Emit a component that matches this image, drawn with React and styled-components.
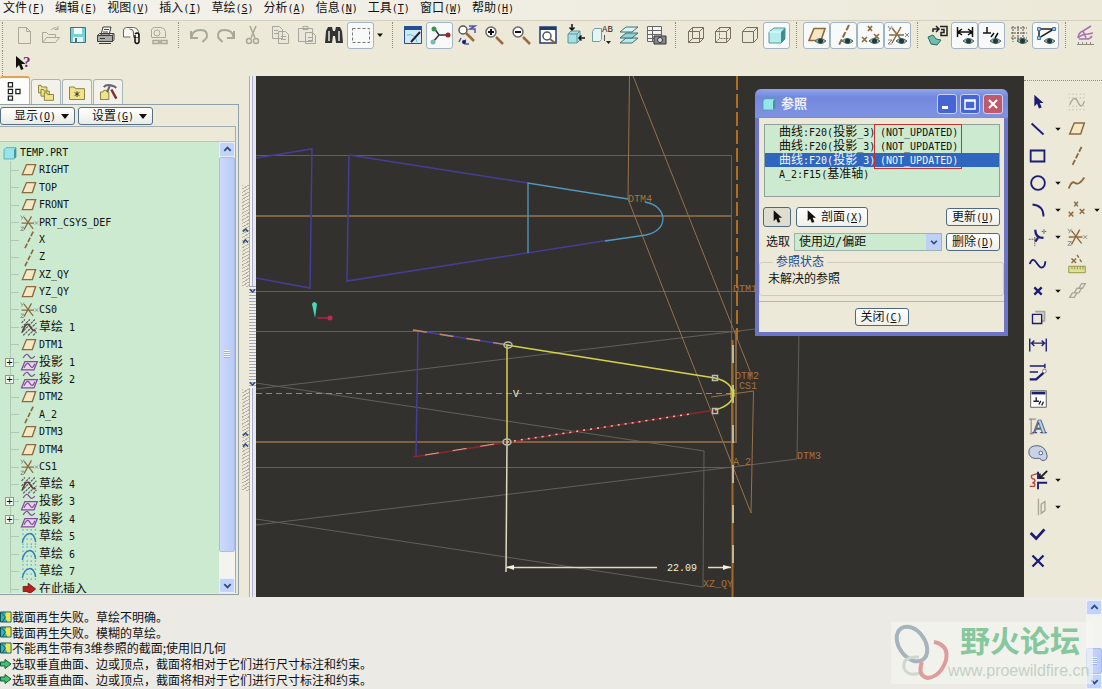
import { useState } from 'react'
import styled, { createGlobalStyle, css } from 'styled-components'

const GlobalStyle = createGlobalStyle`
	* {
		box-sizing: border-box;
	}
	body {
		margin: 0;
		background: #ece9d8;
		color: #111;
		font: 10px/14px 'DejaVu Sans Mono', 'Noto Sans CJK SC', monospace;
	}
	button, select {
		font: inherit;
		color: inherit;
	}
	svg {
		display: block;
		flex: none;
	}
`

const plainButton = css`
	display: flex;
	align-items: center;
	justify-content: center;
	padding: 0;
	border: 0;
	background: none;
`

const Page = styled.div`
	display: flex;
	flex-direction: column;
	height: 100vh;
	overflow: hidden;
`
const Han = styled.span`
	font-size: 12px;
`

const Menu = styled.nav`
	display: flex;
	gap: 10px;
	height: 21px;
	padding-left: 3px;
	border-bottom: 1px solid #d3d0c0;
	background: linear-gradient(90deg, #f3f2ec, #ece9d8);
`
const MenuItem = styled.button`
	${plainButton}
	height: 16px;
	white-space: nowrap;
`

const ToolbarBox = styled.div`
	height: 55px;
	overflow: hidden;
`
const Tools = styled.div`
	display: flex;
	height: 28px;
	align-items: center;
`
const ToolGroup = styled.div`
	display: flex;
	align-items: center;
	height: 26px;
	padding-left: ${({ $first }) => ($first ? '7px' : '6px')};
	margin-left: ${({ $first }) => ($first ? '2px' : '6px')};
	border-left: 1px dotted #8f8c7c;
`
const Tool = styled.button`
	${plainButton}
	width: ${({ $narrow }) => ($narrow ? '12px' : '27px')};
	height: 27px;
	overflow: hidden;
	${({ $pressed }) =>
		$pressed &&
		css`
			border: 1px solid #a3b5c4;
			border-radius: 3px;
			background: #f8fafa;
		`}
`

const Main = styled.main`
	display: flex;
	flex: 1;
	min-height: 0;
`
const Side = styled.aside`
	display: flex;
	flex-direction: column;
	width: 239px;
	padding-bottom: 2px;
`
const Tabs = styled.div`
	display: flex;
	align-items: flex-end;
	gap: 1px;
	height: 28px;
`
const Tab = styled.button`
	${plainButton}
	width: 30px;
	height: 25px;
	border: 1px solid #a9b5bb;
	border-bottom: 0;
	border-radius: 3px 3px 0 0;
	background: #f3f2ea;
	${({ $active }) =>
		$active &&
		css`
			height: 28px;
			border-top: 2px solid #e8a04a;
			border-left: 0;
			background: #fdfdfb;
		`}
`
const Panel = styled.div`
	display: flex;
	flex: 1;
	flex-direction: column;
	min-height: 0;
	padding: 2px 2px 1px 0;
	border: 1px solid #8fa0a8;
	border-left: 0;
`
const PanelButtons = styled.div`
	display: flex;
	gap: 3px;
`
const DropButton = styled.button`
	${plainButton}
	gap: 5px;
	width: 75px;
	height: 18px;
	padding-left: 8px;
	border: 1px solid #54708a;
	border-radius: 3px;
	background: linear-gradient(#fff, #ebebe4);
	white-space: nowrap;
`
const Triangle = styled.span`
	border: 4px solid transparent;
	border-top: 5px solid #111;
	border-bottom: 0;
`
const TreeHead = styled.div`
	height: 16px;
	margin-top: 1px;
	border: 1px solid #a2adb0;
	border-left: 0;
	border-bottom-color: #c4c4b6;
`
const TreeBox = styled.div`
	display: flex;
	flex: 1;
	min-height: 0;
	border-right: 1px solid #a2adb0;
	background: #cceacf;
`
const TreeClip = styled.div`
	flex: 1;
	overflow: hidden;
`
const Tree = styled.ul`
	display: grid;
	grid-auto-rows: minmax(0, 1fr);
	height: calc(100% + 5px);
	margin: 0;
	padding: 2px 0 0 2px;
	list-style: none;
`
const Root = styled.li`
	display: flex;
	align-items: center;
	gap: 2px;
`
const Feature = styled.li`
	display: flex;
	align-items: center;
	min-height: 0;
`
const Expander = styled.span`
	display: flex;
	align-items: center;
	align-self: stretch;
	width: 17px;
	padding-left: 3px;
	background:
		linear-gradient(#b3c8b3, #b3c8b3) 8px 0 / 1px 100% no-repeat,
		linear-gradient(#b3c8b3, #b3c8b3) 9px 50% / 8px 1px no-repeat;
`
const Plus = styled.button`
	${plainButton}
	width: 9px;
	height: 9px;
	border: 1px solid #8d9b8d;
	background: #f4f8f0;
	line-height: 7px;
`

const Scroll = styled.div`
	display: flex;
	flex-direction: column;
	width: 16px;
	background: #f3f3ef;
`
const ScrollButton = styled.button`
	${plainButton}
	height: 15px;
	border: 1px solid #e9effc;
	border-radius: 2px;
	background: #c2d3fa;
`
const Track = styled.div`
	flex: ${({ $size }) => $size} 0 0;
`
const Thumb = styled.div`
	flex: ${({ $size }) => $size} 0 0;
	border: 1px solid #a9bdee;
	border-radius: 2px;
	background:
		repeating-linear-gradient(#eef3ff 0 1px, #9eb4ea 1px 2px) center / 6px 8px no-repeat,
		linear-gradient(90deg, #cbd9fd, #b9cbf6);
`

const Sash = styled.div`
	display: flex;
	flex-direction: column;
	align-items: center;
	justify-content: center;
	gap: 102px;
	width: 10px;
	padding: 2px 0 0 2px;
`
const Grip = styled.div`
	display: flex;
	flex-direction: column;
	align-items: center;
	justify-content: center;
	gap: 2px;
	width: 7px;
	height: 102px;
	background: repeating-linear-gradient(150deg, #b5b2a3 0 1px, #ece9d8 1px 3px);
`
const Splitter = styled.div`
	display: flex;
	flex-direction: column;
	align-items: center;
	justify-content: center;
	width: 7px;
	background: linear-gradient(90deg, #a3a9c6 0 1px, #f3f3f6 1px 3px, #aab0cc 3px 4px, #e6e7ec 4px 7px);
`
const SplitterGrip = styled.div`
	display: flex;
	flex-direction: column;
	align-items: center;
	justify-content: space-between;
	width: 7px;
	height: 102px;
	background: repeating-linear-gradient(#a4a6b5 0 1px, #efefec 1px 3px);
`

const Canvas = styled.section`
	position: relative;
	flex: 1;
	min-width: 0;
	background: #33312d;
`
const CanvasFill = styled.div`
	height: 100%;
	overflow: hidden;
`
const Tags = styled.g`
	fill: ${({ $light }) => ($light ? '#f0efdc' : '#a5733a')};
	font: 10px 'Liberation Mono', monospace;
`

const Dialog = styled.div`
	position: absolute;
	top: 13px;
	right: 16px;
	width: 253px;
	padding: 0 4px 4px;
	border-radius: 6px 6px 0 0;
	background: linear-gradient(#8fa5ec, #7288dd 8px, #7f93e2 28px, #6b74c6 30px);
`
const TitleBar = styled.div`
	display: flex;
	align-items: center;
	gap: 2px;
	height: 29px;
	padding: 0 1px 0 2px;
`
const DialogTitle = styled.strong`
	flex: 1;
	padding-left: 2px;
	color: #eef1fd;
	font-size: 13px;
`
const WindowButton = styled.button`
	${plainButton}
	width: 20px;
	height: 20px;
	margin-left: 1px;
	border: 1px solid #c8d2f6;
	border-radius: 3px;
	background: ${({ $close }) => ($close ? '#c0596a' : '#4665d4')};
`
const DialogBody = styled.div`
	padding-top: 6px;
	background: #ece9d8;
`
const RefList = styled.div`
	position: relative;
	height: 73px;
	margin: 0 4px 0 5px;
	border: 1px solid #8ea19a;
	background: #cceacf;
	white-space: nowrap;
`
const RefRow = styled.div`
	display: grid;
	grid-template-columns: 101px auto;
	align-items: center;
	height: 14px;
	padding-left: 14px;
	line-height: 14px;
	cursor: default;
	${({ $selected }) =>
		$selected &&
		css`
			background: #2f66bf;
			color: #f4f7ff;
		`}
`
const RedMark = styled.div`
	position: absolute;
	top: -1px;
	left: 109px;
	width: 88px;
	height: 45px;
	border: 1px solid #c8322e;
	pointer-events: none;
`
const ButtonRow = styled.div`
	display: flex;
	align-items: center;
	gap: 5px;
	margin: 10px 4px 0;
`
const SelectRow = styled(ButtonRow)`
	gap: 4px;
	margin-top: 6px;
	padding-left: 3px;
`
const Spacer = styled.span`
	flex: 1;
`
const Button = styled.button`
	${plainButton}
	width: ${({ $width }) => $width}px;
	height: ${({ $tall }) => ($tall ? 20 : 18)}px;
	border: 1px solid #4e6a80;
	border-radius: 3px;
	background: ${({ $down }) => ($down ? '#dfddd0' : 'linear-gradient(#fff, #f0efe8)')};
	white-space: nowrap;
`
const SelectBox = styled.div`
	display: grid;
	flex: 1;
	align-items: center;
	justify-items: end;
	border: 1px solid #9fb3ad;
	background: #cceacf;
`
const Select = styled.select`
	grid-area: 1 / 1;
	width: 100%;
	height: 16px;
	padding: 0 4px;
	appearance: none;
	border: 0;
	background: none;
	font-size: 12px;
	line-height: 16px;
`
const SelectArrow = styled.span`
	display: grid;
	grid-area: 1 / 1;
	place-items: center;
	width: 15px;
	height: 16px;
	background: #bfd0f7;
	pointer-events: none;
`
const Status = styled.fieldset`
	height: 41px;
	margin: 4px 0 0;
	padding: 3px 8px 0;
	border: 1px solid #cfccbd;
	border-radius: 3px;
`
const Legend = styled.legend`
	margin-left: 5px;
	padding: 0 3px;
	color: #24468f;
	font-size: 12px;
`
const DialogFoot = styled.div`
	display: flex;
	justify-content: center;
	margin-top: 5px;
	padding: 6px 0;
	border-top: 1px solid #b9b7aa;
`

const SketchGrid = styled.div`
	display: grid;
	grid-template-columns: 28px 11px 28px 11px;
	grid-auto-rows: 27px;
	align-content: start;
	width: 78px;
	margin-top: 4px;
	padding-top: 7px;
	border-top: 1px dotted #8f8c7c;
`
const SketchTool = styled.button`
	${plainButton}
	overflow: hidden;
`
const Empty = styled.span``

const Messages = styled.footer`
	position: relative;
	display: flex;
	height: 92px;
	padding-top: 3px;
	background: #ebeae4;
`
const MessageList = styled.div`
	display: grid;
	flex: 1;
	grid-auto-rows: 1fr;
	padding-top: 9px;
	margin-bottom: 2px;
`
const Message = styled.div`
	display: flex;
	align-items: center;
	font: 12px/15px 'Noto Sans CJK SC', sans-serif;
`
const WatermarkBox = styled.div`
	position: absolute;
	right: 9px;
	bottom: 5px;
	display: flex;
	width: 202px;
	height: 62px;
	background: rgba(247, 247, 244, 0.6);
	pointer-events: none;
`
const Brand = styled.div`
	display: flex;
	flex-direction: column;
	margin-left: -5px;
	font-family: 'Liberation Sans', 'Noto Sans CJK SC', sans-serif;
`
const BrandName = styled.strong`
	padding-left: 12px;
	color: #86c79d;
	font-size: 30px;
	line-height: 40px;
`
const BrandUrl = styled.a`
	color: #c3d0c5;
	font-size: 16px;
	line-height: 18px;
	text-decoration: none;
`

const NAVY = '#1b1c78'
const BROWN = '#8c6a40'
const GRAY = '#a9a799'

const eye = (
	<g>
		<path d="M10 18q5-5 11 0q-5 5-11 0z" fill="#8fb3b0" stroke="#4d6664" />
		<circle cx="15.5" cy="18" r="2.5" fill="#1f3a3a" />
	</g>
)
const plane = <path d="M9 5.500h11l-4 12H4z" fill="#f4e7c4" stroke={BROWN} strokeWidth="1.6" />
const axis = <path d="M17 2L7 22" stroke={BROWN} strokeWidth="2" strokeDasharray="6 2" />
const csys = (
	<g stroke={BROWN} strokeWidth="1.5">
		<path d="M3 12h15M6 5l11 14M15 4L6 20" />
		<path d="M19 10l4 4m0-4l-4 4M2 3l2 3m2-3L3 8M2 17h4l-4 4h4" stroke="#85888a" strokeWidth="1" />
	</g>
)
const points = (
	<path
		d="M9 3l4 5m0-5L9 8M3 14l5 5m0-5l-5 5M15 11l5 5m0-5l-5 5"
		stroke={BROWN}
		strokeWidth="1.6"
	/>
)
const cube = <path d="M4.500 8.500h11v11h-11zM8.500 4.500h11v11M4.500 8.500l4-4M15.500 8.500l4-4M15.500 19.500l4-4" />
const lens = <path d="M14 14l7 7" stroke="#9a6b45" strokeWidth="2.5" />
const caret = <path d="M9 10.500h6l-3 3.500z" fill="#111" />

const icons = {
	new: <path d="M6.500 4.500h8l4 4v12h-12zM14.500 4.500v4h4" stroke={GRAY} />,
	open: <path d="M3.500 19.500V9.500h4l2 2h7v3M3.500 19.500l4-5h13l-4 5zM12 7q4-4 7-1m0-3v3.500h-3.500" stroke={GRAY} />,
	save: (
		<g>
			<path d="M4.500 4.500h15v15h-15z" fill="#78d0da" stroke="#45707c" />
			<path d="M8 5h8v6H8z" fill="#f2fbfc" />
			<path d="M7 14h10v5H7z" fill="#e6f4f5" />
			<path d="M9 15h2v4H9z" fill="#45707c" />
		</g>
	),
	print: (
		<g stroke="#3c3c3c">
			<path d="M8 12l2-8h8l-2 8z" fill="#fff" />
			<path d="M4.500 12.500h15v6h-15z" fill="#aaa" />
			<path d="M4.500 12.500l2-2h14l-1 2M19.500 18.500l1.500-2v-6M6 20.500h12M11 6.500h5M10 9h5M7 15.500h5" />
		</g>
	),
	mail: (
		<g>
			<path d="M3.500 14V7q0-2 3-2.500h7q4 0 5 4v6h-5M3.500 14h7M13.500 14V9q0-3-4-3" fill="#fafaf3" stroke="#666" />
			<path d="M15 12v7q2 3 4 0v-8q-2-2-4 0" stroke="#111" strokeWidth="1.5" />
		</g>
	),
	link: (
		<g stroke={GRAY}>
			<path d="M4.500 14V7q0-2 3-2.500h6q4 0 5 4v6h-14" />
			<circle cx="10" cy="10" r="3" />
			<path d="M6 17.500h6v3H6zM14 17.500h6v3h-6zM12 19h2" strokeWidth="1.5" />
		</g>
	),
	undo: <path d="M4 8v7h7M4.500 14q1-7 9-7t6 8l-4 4" stroke={GRAY} strokeWidth="2" />,
	redo: <path d="M20 8v7h-7M19.500 14q-1-7-9-7t-6 8l4 4" stroke={GRAY} strokeWidth="2" />,
	cut: (
		<g stroke={GRAY} strokeWidth="1.5">
			<path d="M15 3l-5 12M9 3l5 12" />
			<circle cx="8" cy="18" r="2.5" />
			<circle cx="15" cy="18" r="2.5" />
		</g>
	),
	copy: <path d="M4.500 3.500h7l3 3v9h-10zM10.500 8.500h7l3 3v9h-10zM6 7.500h4M6 10.500h4M13 13.500h5M13 16.500h5" fill="#e9e7dc" stroke={GRAY} />,
	paste: <path d="M3.500 5.500h14v13h-14zM8 3.500h5v3H8zM10.500 9.500h7l3 3v8h-10zM13 14.500h5M13 17.500h5" fill="#e9e7dc" stroke={GRAY} />,
	find: (
		<g>
			<path d="M4 8l2-4h4l1 4h2l1-4h4l2 4 1 12h-7l-1-7h-2l-1 7H3z" fill="#333" />
			<path d="M7 8v10M17 8v10" stroke="#b9b9b9" strokeWidth="2" />
		</g>
	),
	marquee: <path d="M3.500 5.500h17v14h-17z" stroke="#777" strokeDasharray="3 2" />,
	sketchView: (
		<g>
			<path d="M3.500 3.500h17v17h-17z" fill="#cfe9f7" stroke="#234f94" />
			<path d="M3 3h18v4H3z" fill="#234f94" />
			<path d="M6 12q8-2 10 7" stroke="#5dbbe0" />
			<path d="M10 19l9-10" stroke="#223" strokeWidth="2" />
		</g>
	),
	spin: (
		<g>
			<path d="M6 5l5 7h9M11 12l-6 7" stroke="#333" strokeWidth="1.5" />
			<circle cx="6" cy="6" r="2.5" fill="#3f8f57" />
			<circle cx="20" cy="12" r="2.5" fill="#9c2525" />
			<circle cx="5" cy="19" r="2.5" fill="#7fb8b4" />
		</g>
	),
	orient: (
		<g>
			<circle cx="8" cy="7" r="4" fill="#fff" stroke="#555" strokeWidth="1.5" />
			<path d="M11 10l8 8" stroke="#9a6b45" strokeWidth="2.5" />
			<path d="M14 3h6l-5 3h5v4M6 15l-2 4M11 17q-4 2-1 4h4" stroke="#5555a5" strokeWidth="1.5" />
			<circle cx="9" cy="19" r="2" fill={NAVY} />
		</g>
	),
	zoomIn: (
		<g>
			{lens}
			<circle cx="9" cy="9" r="5" fill="#fff" stroke="#666" strokeWidth="1.5" />
			<path d="M6 9h6M9 6v6" stroke="#111" strokeWidth="2" />
		</g>
	),
	zoomOut: (
		<g>
			{lens}
			<circle cx="9" cy="9" r="5" fill="#fff" stroke="#666" strokeWidth="1.5" />
			<path d="M6 9h6" stroke="#111" strokeWidth="2" />
		</g>
	),
	refit: (
		<g>
			<path d="M4 4h16v16H4z" fill="#fff" stroke="#1d3c70" strokeWidth="1.5" />
			<path d="M4 4h16v3H4z" fill="#1d3c70" />
			<circle cx="11" cy="13" r="4" stroke="#555" strokeWidth="1.5" />
			<path d="M14 16l5 4" stroke="#8a6040" strokeWidth="2" />
		</g>
	),
	viewOrient: (
		<g>
			<path d="M5 11l3-3h9v9l-3 3H5z" fill="#a8dfe2" stroke="#57999c" />
			<path d="M14 11v9M5 11h9l3-3" stroke="#57999c" />
			<path d="M9 1v6M6.500 4.500L9 7l2.500-2.500M22 15h-6M18.500 12.500L16 15l2.500 2.500" stroke="#111" strokeWidth="1.5" />
		</g>
	),
	saved: (
		<g>
			<path d="M2.500 8.500l2-3h7v11l-2 2h-7z" fill="#e3f5f5" stroke="#74a0a2" />
			<text x="12" y="9" fontSize="9" fontFamily="Liberation Mono" fill="#222">AB</text>
			<path d="M14.500 12v6" stroke="#555" />
			<path d="M16 18h5l-2.500 3z" fill="#222" />
		</g>
	),
	layers: (
		<g stroke="#3a7076">
			<path d="M3 20l6-5h12l-6 5z" fill="#bfe8e8" />
			<path d="M3 15l6-5h12l-6 5z" fill="#8cd3d6" />
			<path d="M3 9l6-5h12l-6 5z" fill="#d7f3f3" />
		</g>
	),
	viewMgr: (
		<g>
			<path d="M3.500 3.500h14v15h-14zM3.500 7.500h14M3.500 11.500h14M3.500 15.500h14M8.500 3.500v15" fill="#f5f5ef" stroke="#666" />
			<path d="M10 13h12v8H10z" fill="#888" stroke="#333" />
			<circle cx="16" cy="17" r="2.5" fill="#ddd" stroke="#333" />
		</g>
	),
	wire: <g stroke="#77705f">{cube}<path d="M8.500 4.500v11h11M4.500 19.500l4-4" /></g>,
	hidden: <g stroke="#77705f">{cube}<path d="M8.500 4.500v11h11M4.500 19.500l4-4" strokeDasharray="2 1" /></g>,
	noHidden: <g stroke="#77705f">{cube}</g>,
	shaded: (
		<g>
			<path d="M4 9l5-4h11v11l-4 4H4z" fill="#b5edef" stroke="#5e9496" />
			<path d="M16 9v11l4-4V5z" fill="#3d8e92" />
			<path d="M4 9h12" stroke="#e6ffff" />
		</g>
	),
	planeShow: <g>{plane}{eye}</g>,
	axisShow: <g>{axis}{eye}</g>,
	pointShow: <g>{points}{eye}</g>,
	csysShow: <g>{csys}{eye}</g>,
	sketchOrient: (
		<g>
			<path d="M2 14l5-2 3 4 5 1-4 5-6-1z" fill="#6fbfae" stroke="#2d6a60" />
			<path d="M7 9V6h5m-2-3l3 3-3 3M14 3.500h7v9h-6v-3h3v-3h-3" stroke="#222" strokeWidth="1.5" />
		</g>
	),
	dimShow: (
		<g>
			<path d="M4.500 4v10M19.500 4v10M5 9h14M9 6L5 9l4 3M15 6l4 3-4 3" stroke="#111" strokeWidth="1.5" />
			{eye}
		</g>
	),
	constrShow: (
		<g>
			<path d="M3 10h8M7 10V4M11 14l3-4M15 15l3-5" stroke="#111" strokeWidth="1.5" />
			{eye}
		</g>
	),
	gridShow: (
		<g>
			<path d="M4 5h16M4 10h16M4 15h16M6 3v16M11 3v16M16 3v16" stroke="#555" strokeDasharray="2 1" />
			{eye}
		</g>
	),
	vertexShow: (
		<g>
			<path d="M5 6h15L5 15z" stroke="#222" strokeWidth="1.5" />
			<path d="M3.500 4.500h3v3h-3zM18.500 4.500h3v3h-3zM3.500 13.500h3v3h-3z" fill="#9ac2e8" stroke="#4a74aa" />
			{eye}
		</g>
	),
	analysis: (
		<g>
			<path d="M4 15q0-5 5-7l8-5M4 15q4-4 10-4l5-1M5 16h8q3 0 5-3M9 8l3 7" stroke="#a870b0" strokeWidth="1.5" />
			<path d="M3 21.500h17M4.500 19v2M8.500 19v2M12.500 19v2M16.500 19v2" stroke="#8c8a7d" />
		</g>
	),
	help: (
		<g>
			<path d="M4 5v12l3-3 2 5 2.500-1-2-5h4z" fill="#111" />
			<text x="11" y="16" fontSize="15" fontWeight="bold" fontFamily="Liberation Serif" fill="#7b1d7b">?</text>
		</g>
	),
	arrow: <path d="M8 4v13l3-3 2 5 3-1-2-5h4z" fill={NAVY} />,
	pick: <path d="M8 4v13l3-3 2 5 3-1-2-5h4z" fill="#111" />,
	line: <path d="M5 6l13 12" stroke={NAVY} strokeWidth="2" />,
	rect: <path d="M4 6h15v12H4z" stroke={NAVY} strokeWidth="2" />,
	circle: <circle cx="12" cy="12" r="7.500" stroke={NAVY} strokeWidth="2" />,
	arc: <path d="M6 6q12 1 12 13" stroke={NAVY} strokeWidth="2" />,
	fillet: (
		<g>
			<path d="M9 4q0 9 9 9M12 13l-3 4" stroke={NAVY} strokeWidth="2.5" />
			<path d="M2 14.500h10M8.500 12v10M16 6h5M18.500 3.500v5" stroke="#555" strokeDasharray="2 1" />
		</g>
	),
	spline: <path d="M3 12q3-8 7-2t6 6q4-1 4-7" stroke={NAVY} strokeWidth="2" />,
	point: <path d="M8 8l8 8M16 8l-8 8" stroke={NAVY} strokeWidth="2.5" />,
	edge: (
		<g>
			<path d="M9 5h10v10h-3" stroke="#a7a594" strokeWidth="2" />
			<path d="M6 8h10v10H6z" stroke={NAVY} strokeWidth="1.5" />
		</g>
	),
	dimension: <path d="M3 5v14M21 5v14M4 10h16M8 7l-3 3 3 3M16 7l3 3-3 3" stroke={NAVY} strokeWidth="1.5" />,
	modify: (
		<g stroke={NAVY}>
			<path d="M3 5.500h17M19.500 3v5M3 12h9" strokeWidth="1.5" />
			<path d="M3 20h7l8-7" strokeWidth="2.5" />
			<circle cx="19" cy="11" r="2" fill="#fff" stroke="#777" />
		</g>
	),
	constrain: (
		<g>
			<path d="M4 3h17v18H4z" fill="#fff" stroke="#555" />
			<path d="M5 4h15v3H5z" fill={NAVY} />
			<path d="M7 14.500h6M10 14v-4M13 18l2-4M16 19l2-4" stroke="#222" strokeWidth="1.5" />
		</g>
	),
	text: (
		<g>
			<path d="M4.500 4v17M2 4.500h8M3 20.500h4" stroke="#777" />
			<text x="6" y="20" fontSize="21" fontWeight="bold" fontFamily="Liberation Serif" fill="#c7d3ea" stroke="#2c3f6b" strokeWidth="0.8">A</text>
		</g>
	),
	palette: (
		<g stroke="#4b5474">
			<path d="M2 11q0-7 9-7t11 11q0 6-6 5-1-3-7-2-7-1-7-7z" fill="#c9d3e6" />
			<circle cx="15" cy="12" r="2" fill="#fff" />
		</g>
	),
	trim: (
		<g>
			<path d="M3 19h5q2-3-2-4 4-1 2-4-4 0-3-4l6-2" stroke="#b3473b" strokeWidth="1.5" />
			<path d="M12 22v-7h10M12 3v8" stroke={NAVY} strokeWidth="2" />
			<path d="M22 2l-7 7M14 5v5h5" stroke="#222" strokeWidth="2" />
		</g>
	),
	mirror: <path d="M12.500 3v18M15.500 9l4-3v10l-4 3z" stroke={GRAY} strokeWidth="1.5" />,
	done: <path d="M4 11l6 6L19 7" stroke={NAVY} strokeWidth="3" />,
	quit: <path d="M6 6l12 12M18 6L6 18" stroke={NAVY} strokeWidth="2.5" />,
	sketchOff: (
		<g stroke={GRAY}>
			<path d="M3 3.500h18M3 7.500h18M3 20.500h18M3 16.500h18" strokeDasharray="1 3" />
			<path d="M4 15q5-12 9-3t7-1" strokeWidth="1.5" />
		</g>
	),
	plane,
	axis,
	curve: <path d="M3 18q3-9 7-6t10-6" stroke={BROWN} strokeWidth="2" />,
	points,
	csys,
	measure: (
		<g>
			<path d="M3 14.500h18v7H3z" fill="#e0e29a" stroke="#8e8f3e" />
			<path d="M6.500 15v3M9.500 15v3M12.500 15v3M15.500 15v3M18.500 15v3" stroke="#8e8f3e" />
			<path d="M6 6l5 5m0-5l-5 5M12 2l2 3M15 7l2 3" stroke={BROWN} strokeWidth="1.5" />
		</g>
	),
	chain: <path d="M4 19l3-5 5 0-3 5zM9 14l3-5 5 0-3 5zM14 9l3-5 4 0-3 5z" stroke={GRAY} strokeWidth="1.5" />,
	part: (
		<g>
			<path d="M3 7l3-3h15v14l-3 3H3z" fill="#93e6ea" stroke="#4e8e95" />
			<path d="M18 7v14l3-3V4z" fill="#4a959b" />
		</g>
	),
	sketchHatch: (
		<g>
			<path d="M3 7l4-4M3 13L13 3M3 19L19 3M5 22L21 7M11 22l10-9M17 22l4-4" stroke="#555" strokeWidth="1.4" strokeDasharray="3 1" />
			<path d="M4 18q5-14 9-7t7 5" stroke="#5b3c44" strokeWidth="2" />
		</g>
	),
	sketch: (
		<g>
			<path d="M4 3.500h17M4 8.500h17M4 14.500h17M4 20.500h17" stroke="#4ba5c4" strokeWidth="1.5" strokeDasharray="1.500 3.500" />
			<path d="M4 19q2-10 8-11t8 10" stroke="#2f7fbe" strokeWidth="1.8" />
		</g>
	),
	project: (
		<g stroke="#7e4f96" strokeWidth="1.5">
			<path d="M5 7q4-7 7-2t7 0" />
			<path d="M7 11.500h15l-4 10H3z" fill="#e6d4ee" />
			<path d="M6 19q4-9 7-3t6-2" />
		</g>
	),
	insert: <path d="M5 9h6V5l9 7-9 7v-4H5z" fill="#b52020" stroke="#6e1414" />,
	tabTree: <path d="M4 2h5v5H4zM4 10h5v5H4zM4 18h5v5H4zM13 10h5v5h-5z" stroke="#222" strokeWidth="1.5" />,
	tabFolders: (
		<g fill="#efe48a" stroke="#77702c">
			<path d="M3 4h3l1 2h6v7H3z" />
			<path d="M6 9h3l1 2h6v6H6z" />
			<path d="M10 13h3l1 2h7v7H10z" />
		</g>
	),
	tabFavorites: (
		<g>
			<path d="M3 6h6l1 2h11v13H3z" fill="#efe48a" stroke="#77702c" />
			<path d="M12 11v7M9 12.500l6 4M15 12.500l-6 4" stroke="#222" />
		</g>
	),
	tabTools: (
		<g>
			<path d="M3 12h3l1-2h4v2h2v9H3z" fill="#efe48a" stroke="#77702c" />
			<path d="M7 6q3-4 12-1l3 2M14 5L11 12" stroke="#667" strokeWidth="2.5" />
			<path d="M16 9l6 11" stroke="#8c2c2c" strokeWidth="3" />
		</g>
	),
	warn: (
		<g>
			<path d="M1 2h21v20H1z" fill="#3fb1b5" stroke="#155" strokeWidth="2" />
			<path d="M12 3h9v18h-6l-5-9z" fill="#f2e546" />
			<path d="M3 4l8 8-6 9" stroke="#155" strokeWidth="2" />
		</g>
	),
	tip: <path d="M1 8h9V3l12 9-12 9v-5H1z" fill="#3fc273" stroke="#145c33" strokeWidth="2" />,
	caret,
	up: <path d="M5 15l7-7 7 7" stroke="#2f4a86" strokeWidth="4" />,
	down: <path d="M5 9l7 7 7-7" stroke="#2f4a86" strokeWidth="4" />,
}

function Icon({ name, size = 24 }) {
	return (
		<svg width={size} height={size} viewBox="0 0 24 24" fill="none" aria-hidden="true">
			{icons[name]}
		</svg>
	)
}

// chinese runs are set two pixels larger than the latin ones
function Mixed({ text }) {
	return text
		.split(/([\u3000-\u9fff\uff00-\uffef]+)/)
		.map((part, i) => (i % 2 ? <Han key={i}>{part}</Han> : part))
}

function HotLabel({ text, hot }) {
	return (
		<span>
			<Mixed text={text} />(<u>{hot}</u>)
		</span>
	)
}

const menus = [
	['文件', 'F'],
	['编辑', 'E'],
	['视图', 'V'],
	['插入', 'I'],
	['草绘', 'S'],
	['分析', 'A'],
	['信息', 'N'],
	['工具', 'T'],
	['窗口', 'W'],
	['帮助', 'H'],
]

// a trailing * marks a pressed button
const toolGroups = [
	['new', 'open', 'save', 'print', 'mail', 'link'],
	['undo', 'redo', 'cut', 'copy', 'paste', 'find', 'marquee*', 'caret'],
	['sketchView', 'spin*', 'orient', 'zoomIn', 'zoomOut', 'refit', 'viewOrient', 'saved', 'layers', 'viewMgr'],
	['wire', 'hidden', 'noHidden', 'shaded*'],
	['planeShow*', 'axisShow*', 'pointShow*', 'csysShow*'],
	['sketchOrient', 'dimShow*', 'constrShow*', 'gridShow', 'vertexShow*'],
	['analysis'],
]

const sketchTools = [
	['arrow', '', 'sketchOff', ''],
	['line', 'caret', 'plane', ''],
	['rect', '', 'axis', ''],
	['circle', 'caret', 'curve', ''],
	['arc', 'caret', 'points', 'caret'],
	['fillet', 'caret', 'csys', ''],
	['spline', '', 'measure', ''],
	['point', 'caret', 'chain', ''],
	['edge', 'caret', '', ''],
	['dimension', '', '', ''],
	['modify', '', '', ''],
	['constrain', '', '', ''],
	['text', '', '', ''],
	['palette', '', '', ''],
	['trim', 'caret', '', ''],
	['mirror', 'caret', '', ''],
	['done', '', '', ''],
	['quit', '', '', ''],
]

const features = [
	['plane', 'RIGHT'],
	['plane', 'TOP'],
	['plane', 'FRONT'],
	['csys', 'PRT_CSYS_DEF'],
	['axis', 'X'],
	['axis', 'Z'],
	['plane', 'XZ_QY'],
	['plane', 'YZ_QY'],
	['csys', 'CS0'],
	['sketchHatch', '草绘 1'],
	['plane', 'DTM1'],
	['project', '投影 1'],
	['project', '投影 2'],
	['plane', 'DTM2'],
	['axis', 'A_2'],
	['plane', 'DTM3'],
	['plane', 'DTM4'],
	['csys', 'CS1'],
	['sketchHatch', '草绘 4'],
	['project', '投影 3'],
	['project', '投影 4'],
	['sketch', '草绘 5'],
	['sketch', '草绘 6'],
	['sketch', '草绘 7'],
	['insert', '在此插入'],
]

const references = [
	['曲线:F20(投影_3)', '(NOT_UPDATED)'],
	['曲线:F20(投影_3)', '(NOT_UPDATED)'],
	['曲线:F20(投影_3)', '(NOT_UPDATED)'],
	['A_2:F15(基准轴)', ''],
]

const messages = [
	['warn', '截面再生失败。草绘不明确。'],
	['warn', '截面再生失败。模糊的草绘。'],
	['warn', '不能再生带有3维参照的截面;使用旧几何'],
	['tip', '选取垂直曲面、边或顶点，截面将相对于它们进行尺寸标注和约束。'],
	['tip', '选取垂直曲面、边或顶点，截面将相对于它们进行尺寸标注和约束。'],
]

function Toolbar() {
	return (
		<ToolbarBox>
			<Tools>
				{toolGroups.map((group, i) => (
					<ToolGroup key={i} $first={i === 0}>
						{group.map(item => {
							const name = item.replace('*', '')
							return (
								<Tool
									key={name}
									aria-label={name}
									$pressed={item !== name}
									$narrow={name === 'caret'}
								>
									<Icon name={name} />
								</Tool>
							)
						})}
					</ToolGroup>
				))}
			</Tools>
			<Tools>
				<ToolGroup $first>
					<Tool aria-label="help">
						<Icon name="help" />
					</Tool>
				</ToolGroup>
			</Tools>
		</ToolbarBox>
	)
}

function ScrollBar({ before, thumb, after }) {
	return (
		<Scroll>
			<ScrollButton aria-label="up">
				<Icon name="up" size={11} />
			</ScrollButton>
			<Track $size={before} />
			<Thumb $size={thumb} />
			<Track $size={after} />
			<ScrollButton aria-label="down">
				<Icon name="down" size={11} />
			</ScrollButton>
		</Scroll>
	)
}

function ModelTree() {
	return (
		<Side>
			<Tabs>
				{['tabTree', 'tabFolders', 'tabFavorites', 'tabTools'].map((name, i) => (
					<Tab key={name} aria-label={name} $active={i === 0}>
						<Icon name={name} size={20} />
					</Tab>
				))}
			</Tabs>
			<Panel>
				<PanelButtons>
					<DropButton>
						<HotLabel text="显示" hot="O" />
						<Triangle />
					</DropButton>
					<DropButton>
						<HotLabel text="设置" hot="G" />
						<Triangle />
					</DropButton>
				</PanelButtons>
				<TreeHead />
				<TreeBox>
					<TreeClip>
						<Tree>
							<Root>
								<Icon name="part" size={16} />
								TEMP.PRT
							</Root>
							{features.map(([icon, name]) => (
								<Feature key={name}>
									<Expander>{icon === 'project' && <Plus>+</Plus>}</Expander>
									<Icon name={icon} size={20} />
									<span>
										<Mixed text={name} />
									</span>
								</Feature>
							))}
						</Tree>
					</TreeClip>
					<ScrollBar before={0} thumb={15} after={1} />
				</TreeBox>
			</Panel>
		</Side>
	)
}

function Divider() {
	return (
		<>
			<Sash>
				<Grip>
					<Icon name="up" size={9} />
					<Icon name="up" size={9} />
				</Grip>
				<Grip>
					<Icon name="up" size={9} />
					<Icon name="up" size={9} />
				</Grip>
			</Sash>
			<Splitter>
				<SplitterGrip>
					<Icon name="down" size={9} />
					<Icon name="down" size={9} />
				</SplitterGrip>
			</Splitter>
		</>
	)
}

function Drawing() {
	return (
		<svg width="100%" height="100%" viewBox="256 76 768 521" preserveAspectRatio="xMidYMid slice" fill="none">
			<g stroke="#62605d">
				<path d="M256 155.500H732M256 291.500H755M256 331.500H740M256 467.500H735" />
				<path d="M256 389L755 329M256 383L704 451L703 587M256 525L733 467L797 459L799 330M256 519L703 587" />
				<path d="M731.500 155V467" />
			</g>
			<path d="M256 216H732M256 442H736V330" stroke="#806144" strokeWidth="2" />
			<path d="M256 393.500H732" stroke="#a58c3c" strokeDasharray="6 4" />
			<g stroke="#96724a">
				<path d="M629.500 76L628 199L731 462L751 513L753.500 391L711 397" />
				<path d="M633 76L750 371V380" />
				<path d="M732.500 340V597" stroke="#a06a2c" strokeWidth="2" />
			</g>
			<path d="M737 76V340" stroke="#b06d22" strokeWidth="2" strokeDasharray="14 4" />
			<path d="M733 345V571" stroke="#c9b68f" strokeWidth="2" strokeDasharray="18 22" />
			<g stroke="#453d98" strokeWidth="1.5">
				<path d="M256 158L312 149L310 288L256 278" />
				<path d="M349 155L528 183M349 155L347 281L610 240" />
				<path d="M418 331L416 457" />
			</g>
			<path d="M528 253V183L628 199M605 241L646 235Q663 231 663 218Q661 205 645 202" stroke="#4f9bc0" strokeWidth="1.3" />
			<path d="M413 330L508 345" stroke="#433db0" strokeWidth="1.5" />
			<path d="M413 330L508 345" stroke="#c58a58" strokeWidth="1.5" strokeDasharray="14 13" />
			<path d="M413 457L715 410" stroke="#8e2630" strokeWidth="1.5" />
			<path d="M507 442L690 414" stroke="#e4c1aa" strokeWidth="1.5" strokeDasharray="2 5" />
			<path d="M425 455L507 442" stroke="#d8a890" strokeDasharray="14 14" />
			<path d="M507 442V345L715 378Q732 382 733 394Q733 405 715 410" stroke="#d5d34b" strokeWidth="1.5" />
			<path d="M507 442L506 572M506 567.500H657M708 567.500H731" stroke="#dcdcc0" strokeWidth="1.5" />
			<path d="M506 567l8-2v5zM731 567l-8-2v5z" fill="#f3f3df" />
			<g stroke="#b9bcb4" strokeWidth="1.5">
				<ellipse cx="508" cy="345" rx="4" ry="3" />
				<ellipse cx="507" cy="442" rx="4" ry="3" />
				<path d="M712.500 375.500h5v5h-5zM712.500 408.500h5v5h-5z" />
			</g>
			<path d="M731 388v10M734 389v8" stroke="#e8df60" />
			<path d="M312 304q2-4 5 0l-2 14z" fill="#45d9b5" />
			<path d="M317 318h12" stroke="#b3224a" strokeWidth="1.5" />
			<circle cx="330" cy="318" r="2.5" fill="#c4274f" />
			<Tags>
				<text x="628" y="202">DTM4</text>
				<text x="733" y="292">DTM1</text>
				<text x="735" y="379">DTM2</text>
				<text x="739" y="389">CS1</text>
				<text x="797" y="459">DTM3</text>
				<text x="733" y="465">A_2</text>
				<text x="703" y="587">XZ_QY</text>
			</Tags>
			<Tags $light>
				<text x="513" y="397">V</text>
				<text x="667" y="571">22.09</text>
			</Tags>
		</svg>
	)
}

function ReferenceDialog() {
	const [selected, setSelected] = useState(2)

	return (
		<Dialog role="dialog" aria-label="参照">
			<TitleBar>
				<Icon name="part" size={16} />
				<DialogTitle>参照</DialogTitle>
				<WindowButton aria-label="minimize">
					<svg width="12" height="12" viewBox="0 0 12 12">
						<path d="M1 8h6v3H1z" fill="#fff" />
					</svg>
				</WindowButton>
				<WindowButton aria-label="maximize">
					<svg width="12" height="12" viewBox="0 0 12 12">
						<path d="M1 2h10v9H1zM1 3h10" fill="none" stroke="#fff" strokeWidth="1.5" />
					</svg>
				</WindowButton>
				<WindowButton aria-label="close" $close>
					<svg width="12" height="12" viewBox="0 0 12 12">
						<path d="M2 2l8 8M10 2l-8 8" stroke="#fff" strokeWidth="2" />
					</svg>
				</WindowButton>
			</TitleBar>
			<DialogBody>
				<RefList>
					{references.map(([name, status], i) => (
						<RefRow key={i} $selected={i === selected} onClick={() => setSelected(i)}>
							<span>
								<Mixed text={name} />
							</span>
							<span>{status}</span>
						</RefRow>
					))}
					<RedMark />
				</RefList>
				<ButtonRow>
					<Button $width={28} $tall $down aria-label="选取">
						<Icon name="pick" size={20} />
					</Button>
					<Button $width={72} $tall>
						<Icon name="pick" size={20} />
						<HotLabel text="剖面" hot="X" />
					</Button>
					<Spacer />
					<Button $width={54}>
						<HotLabel text="更新" hot="U" />
					</Button>
				</ButtonRow>
				<SelectRow>
					<label htmlFor="pick-mode">
						<Han>选取</Han>
					</label>
					<SelectBox>
						<Select id="pick-mode" defaultValue="edge">
							<option value="edge">使用边/偏距</option>
						</Select>
						<SelectArrow>
							<Icon name="down" size={10} />
						</SelectArrow>
					</SelectBox>
					<Button $width={54}>
						<HotLabel text="删除" hot="D" />
					</Button>
				</SelectRow>
				<Status>
					<Legend>参照状态</Legend>
					<Han>未解决的参照</Han>
				</Status>
				<DialogFoot>
					<Button $width={54}>
						<HotLabel text="关闭" hot="C" />
					</Button>
				</DialogFoot>
			</DialogBody>
		</Dialog>
	)
}

function SketchTools() {
	return (
		<SketchGrid>
			{sketchTools.flatMap((row, r) =>
				row.map((name, c) =>
					name ? (
						<SketchTool key={`${r}-${c}`} aria-label={name}>
							<Icon name={name} size={c % 2 ? 22 : 22} />
						</SketchTool>
					) : (
						<Empty key={`${r}-${c}`} />
					),
				),
			)}
		</SketchGrid>
	)
}

function Watermark() {
	return (
		<WatermarkBox>
			<svg width="62" height="62" viewBox="0 0 62 62" fill="none" strokeWidth="4">
				<ellipse cx="21" cy="22" rx="13" ry="19" transform="rotate(-35 21 22)" stroke="#a5b4bd" />
				<path d="M28 35Q11 34 13 46Q17 56 32 50" stroke="#d0d6d1" strokeWidth="3" />
				<path d="M43 20Q58 23 55 38Q50 54 37 56Q26 54 31 40" stroke="#dd9d9b" />
			</svg>
			<Brand>
				<BrandName>野火论坛</BrandName>
				<BrandUrl href="#">www.proewildfire.cn</BrandUrl>
			</Brand>
		</WatermarkBox>
	)
}

function App() {
	return (
		<Page>
			<GlobalStyle />
			<Menu>
				{menus.map(([text, hot]) => (
					<MenuItem key={hot}>
						<HotLabel text={text} hot={hot} />
					</MenuItem>
				))}
			</Menu>
			<Toolbar />
			<Main>
				<ModelTree />
				<Divider />
				<Canvas>
					<CanvasFill>
						<Drawing />
					</CanvasFill>
					<ReferenceDialog />
				</Canvas>
				<SketchTools />
			</Main>
			<Messages>
				<MessageList>
					{messages.map(([icon, text], i) => (
						<Message key={i}>
							<Icon name={icon} size={12} />
							{text}
						</Message>
					))}
				</MessageList>
				<ScrollBar before={4} thumb={3} after={0} />
				<Watermark />
			</Messages>
		</Page>
	)
}
export default App
